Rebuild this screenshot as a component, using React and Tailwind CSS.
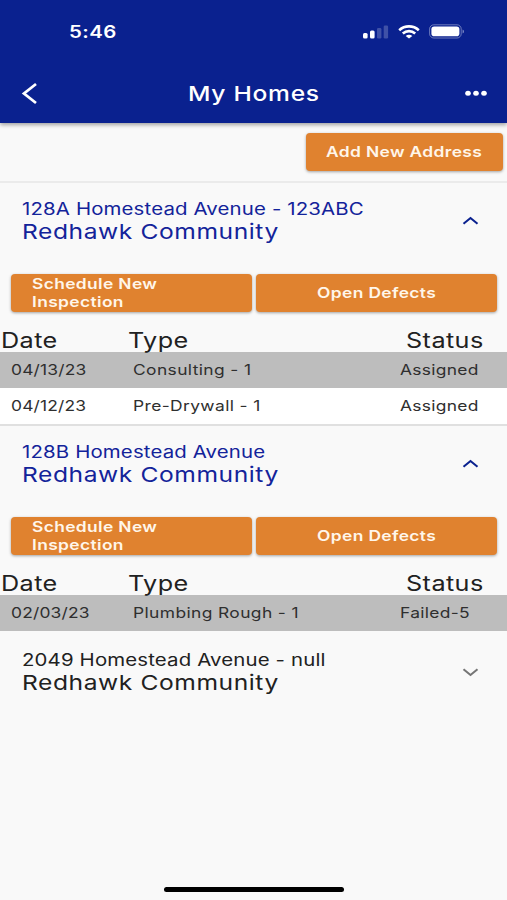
import clsx from 'clsx';

const homes = [
  {
    address: '128A Homestead Avenue - 123ABC',
    community: 'Redhawk Community',
    open: true,
    inspections: [
      { date: '04/13/23', type: 'Consulting - 1', status: 'Assigned' },
      { date: '04/12/23', type: 'Pre-Drywall - 1', status: 'Assigned' },
    ],
  },
  {
    address: '128B Homestead Avenue',
    community: 'Redhawk Community',
    open: true,
    inspections: [
      { date: '02/03/23', type: 'Plumbing Rough - 1', status: 'Failed-5' },
    ],
  },
  {
    address: '2049 Homestead Avenue - null',
    community: 'Redhawk Community',
    open: false,
    inspections: [],
  },
];

// Extended-width text, anchored on the left unless told otherwise
function Wide({ className, children }) {
  return (
    <span className={clsx('block w-max whitespace-nowrap scale-x-[1.2]', className || 'origin-left')}>
      {children}
    </span>
  );
}

function StatusBar() {
  return (
    <div className="flex h-[63px] items-center justify-between pl-[69px] pr-[42px] text-white">
      <Wide className="origin-left pt-[2px] text-[17px] font-semibold tracking-[0.4px]">5:46</Wide>
      <div className="flex items-center">
        <svg width="26" height="14" viewBox="0 0 26 14" fill="currentColor">
          <rect x="0" y="8" width="4.6" height="5.5" rx="1.5" />
          <rect x="7" y="5.5" width="4.6" height="8" rx="1.5" />
          <rect x="14" y="3" width="4.4" height="10.5" rx="1.3" opacity="0.22" />
          <rect x="20.7" y="0.4" width="4.4" height="13.1" rx="1.3" opacity="0.22" />
        </svg>
        <svg className="ml-[9px]" width="22" height="14" viewBox="0 0 22 14" fill="none" stroke="currentColor" strokeWidth="2.6">
          <path d="M1.2 5.2C6.8 0.1 15.2 0.1 20.8 5.2" />
          <path d="M4.8 8.5C8.4 5.3 13.6 5.3 17.2 8.5" />
          <path d="M11 13.6L7.7 10.9C9.5 9.2 12.5 9.2 14.3 10.9Z" fill="currentColor" stroke="none" />
        </svg>
        <svg className="ml-[9px]" width="36" height="15" viewBox="0 0 36 15" fill="none">
          <rect x="0.6" y="0.8" width="31.6" height="13.2" rx="4.2" stroke="currentColor" strokeOpacity="0.4" />
          <rect x="2.4" y="2.6" width="28" height="9.6" rx="2.8" fill="currentColor" />
          <path d="M33.6 5.4C35.4 6 35.4 8.8 33.6 9.4Z" fill="currentColor" fillOpacity="0.5" />
        </svg>
      </div>
    </div>
  );
}

function Header() {
  return (
    <header className="relative z-10 h-[123px] bg-[#0a218f] shadow-[0_2px_4px_rgba(0,0,0,0.35)]">
      <StatusBar />
      <div className="flex h-[60px] items-center justify-between pl-[21px] pr-[20px] text-white">
        <button className="w-[24px]" aria-label="Back">
          <svg width="18" height="24" viewBox="0 0 18 24" fill="none" stroke="currentColor" strokeWidth="2.8">
            <path d="M15 3L3 12.5L15 22" />
          </svg>
        </button>
        <h1 className="pt-[2px] text-[20.5px] font-medium tracking-[0.6px]">
          <Wide className="origin-center">My Homes</Wide>
        </h1>
        <button className="flex w-[24px] justify-end" aria-label="More">
          <svg width="22" height="6" viewBox="0 0 22 6" fill="currentColor">
            <ellipse cx="3" cy="3.3" rx="2.8" ry="2.5" />
            <ellipse cx="11" cy="3.3" rx="2.8" ry="2.5" />
            <ellipse cx="19" cy="3.3" rx="2.8" ry="2.5" />
          </svg>
        </button>
      </div>
    </header>
  );
}

function ActionButton({ className, children }) {
  return (
    <button
      className={clsx(
        'flex h-[38px] items-center rounded-[4px] bg-[#e0822f] text-[14.5px] leading-[18px] font-semibold tracking-[0.3px] text-[#fff6ea] shadow-[0_1px_3px_rgba(0,0,0,0.35)]',
        className
      )}
    >
      {children}
    </button>
  );
}

function Chevron({ open }) {
  return (
    <svg
      className={clsx('mr-[28px]', open ? 'text-[#0a218f]' : 'text-[#757575]')}
      width="17"
      height="10"
      viewBox="0 0 17 10"
      fill="none"
      stroke="currentColor"
      strokeWidth="2.1"
    >
      <path d={open ? 'M1.5 7.7L8.5 2L15.5 7.7' : 'M1.5 2.3L8.5 8L15.5 2.3'} />
    </svg>
  );
}

function InspectionTable({ inspections }) {
  return (
    <div>
      <div className="flex h-[40px] items-end text-[21px] leading-[23px] tracking-[0.35px] text-[#212121]">
        <div className="w-[128px] pl-px"><Wide>Date</Wide></div>
        <div className="w-[278px]"><Wide>Type</Wide></div>
        <div><Wide>Status</Wide></div>
      </div>
      {inspections.map((item) => (
        <div
          key={item.date}
          className="flex h-[36px] items-center pl-[11px] text-[14.5px] text-[#2f2f2f] odd:bg-white even:bg-[#bdbdbd]"
        >
          <div className="w-[121.5px] tracking-[0.15px]"><Wide>{item.date}</Wide></div>
          <div className="w-[267px] tracking-[0.32px]"><Wide>{item.type}</Wide></div>
          <div className="tracking-[0.25px]"><Wide>{item.status}</Wide></div>
        </div>
      ))}
    </div>
  );
}

function HomeSection({ home }) {
  return (
    <section className="border-t-2 border-[#e0e0e0] first:border-[#ebebeb] last:border-transparent last:pt-px">
      <div className={clsx('flex h-[76px] items-center justify-between pl-[22px]', home.open ? 'text-[#13239a]' : 'text-[#212121]')}>
        <div>
          <div className="text-[17px] leading-[22px] tracking-[0.12px]"><Wide>{home.address}</Wide></div>
          <div className="text-[20.5px] leading-[24px] tracking-[0.48px]"><Wide>{home.community}</Wide></div>
        </div>
        <Chevron open={home.open} />
      </div>
      {home.open && (
        <>
          <div className="grid grid-cols-2 gap-[4px] pt-[15px] pr-[10px] pl-[11px]">
            <ActionButton className="pl-[21px] text-left">
              <span className="origin-left scale-x-[1.2]">Schedule New<br />Inspection</span>
            </ActionButton>
            <ActionButton className="justify-center">
              <Wide className="origin-center">Open Defects</Wide>
            </ActionButton>
          </div>
          <InspectionTable inspections={home.inspections} />
        </>
      )}
    </section>
  );
}

export default function App() {
  return (
    <div className="flex h-[900px] w-[507px] flex-col overflow-hidden bg-[#f9f9f9] font-['Inter',sans-serif]">
      <Header />
      <div className="flex h-[58px] items-center justify-end pr-[4px]">
        <ActionButton className="w-[197px] justify-center">
          <Wide className="origin-center">Add New Address</Wide>
        </ActionButton>
      </div>
      <main className="flex-1">
        {homes.map((home) => (
          <HomeSection key={home.address} home={home} />
        ))}
      </main>
      <div className="flex justify-center pb-[8px]">
        <div className="h-[5px] w-[180px] rounded-full bg-black" />
      </div>
    </div>
  );
}
